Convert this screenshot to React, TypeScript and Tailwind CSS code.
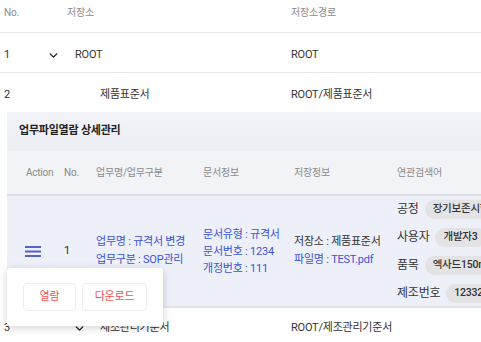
import { ChevronDown } from "lucide-react";

const font = { fontFamily: "Roboto, 'Noto Sans CJK KR', sans-serif" };

function Chevron() {
    return <ChevronDown className="w-[13px] h-[13px] text-[#222]" strokeWidth={2.6} />;
}

function Chip({ label, value }: { label: string; value: string }) {
    return (
        <div className="flex items-center gap-[6px] h-[28px]">
            <span className="text-[12px] text-[#333]">{label}</span>
            <span className="h-[19px] px-[8px] flex items-center rounded-full bg-[#e3e3e5] text-[10.5px] font-medium text-[#333] whitespace-nowrap">
                {value}
            </span>
        </div>
    );
}

export default function App() {
    return (
        <div className="w-[481px] h-[342px] overflow-hidden bg-white relative text-[11px] text-[#333] tracking-[-0.02em]" style={font}>
            {/* outer table header */}
            <div className="flex h-[33px] pt-[5px] border-b border-[#e6e6e6] text-[10px] text-[#8a8a8a]">
                <div className="w-[67px] shrink-0 pl-[4px]">No.</div>
                <div className="w-[224px] shrink-0">저장소</div>
                <div>저장소경로</div>
            </div>

            <div className="flex items-center h-[40px] pt-[5px] border-b border-[#e6e6e6]">
                <div className="w-[47px] shrink-0 pl-[4px]">1</div>
                <div className="w-[244px] shrink-0 flex items-center gap-[15px]">
                    <Chevron />
                    <span>ROOT</span>
                </div>
                <div>ROOT</div>
            </div>

            <div className="flex items-center h-[39px] pt-[5px]">
                <div className="w-[100px] shrink-0 pl-[4px]">2</div>
                <div className="w-[191px] shrink-0">제품표준서</div>
                <div>ROOT/제품표준서</div>
            </div>

            {/* expanded panel */}
            <div className="ml-[7px] bg-[#eff2f8] border-b-2 border-[#e2e4ea]">
                <div className="h-[39px] pl-[12px] flex items-center font-bold text-[11px] text-[#222] bg-gradient-to-b from-[#f1f3f9] to-[#edeff4]">
                    업무파일열람 상세관리
                </div>
                <div className="flex items-center h-[45px] bg-[#f2f3f7] border-b-2 border-[#dcdee3] text-[10px] text-[#8a8a8a] whitespace-nowrap">
                    <div className="w-[57px] shrink-0 pl-[19px]">Action</div>
                    <div className="w-[32px] shrink-0">No.</div>
                    <div className="w-[107px] shrink-0">업무명/업무구분</div>
                    <div className="w-[91px] shrink-0">문서정보</div>
                    <div className="w-[103px] shrink-0">저장정보</div>
                    <div className="shrink-0">연관검색어</div>
                </div>
                <div className="flex items-center h-[110px] bg-[#edf0f8] whitespace-nowrap">
                    <div className="w-[57px] shrink-0 pl-[18px] flex">
                        <svg width="16" height="12" viewBox="0 0 16 12">
                            <rect x="0" y="1" width="16" height="2" fill="#5563c1" />
                            <rect x="0" y="5.5" width="16" height="2" fill="#5563c1" />
                            <rect x="0" y="10" width="16" height="2" fill="#5563c1" />
                        </svg>
                    </div>
                    <div className="w-[32px] shrink-0">1</div>
                    <div className="w-[107px] shrink-0 text-[#3b52d9] leading-[18px]">
                        <div>업무명 : 규격서 변경</div>
                        <div>업무구분 : SOP관리</div>
                    </div>
                    <div className="w-[91px] shrink-0 text-[#3b52d9] leading-[17px]">
                        <div>문서유형 : 규격서</div>
                        <div>문서번호 : 1234</div>
                        <div>개정번호 : 111</div>
                    </div>
                    <div className="w-[103px] shrink-0 leading-[18px]">
                        <div>저장소 : 제품표준서</div>
                        <div className="text-[#3b52d9]">파일명 : TEST.pdf</div>
                    </div>
                    <div className="shrink-0 flex flex-col">
                        <Chip label="공정" value="장기보존시험" />
                        <Chip label="사용자" value="개발자3" />
                        <Chip label="품목" value="엑사드150mg" />
                        <Chip label="제조번호" value="12332" />
                    </div>
                </div>
            </div>

            <div className="flex items-center h-[40px]">
                <div className="w-[73px] shrink-0 pl-[4px]">3</div>
                <div className="w-[27px] shrink-0"><Chevron /></div>
                <div className="w-[191px] shrink-0">제조관리기준서</div>
                <div>ROOT/제조관리기준서</div>
            </div>

            {/* action popup */}
            <div className="absolute left-[7px] top-[268px] w-[156px] h-[58px] bg-white rounded-[3px] shadow-[0_2px_8px_rgba(0,0,0,0.18)] flex items-center gap-[6px] pl-[16px]">
                <button className="w-[53px] h-[28px] rounded-[4px] border border-[#ececec] text-[11px] text-[#f0524f]">열람</button>
                <button className="w-[65px] h-[28px] rounded-[4px] border border-[#ececec] text-[11px] text-[#f0524f]">다운로드</button>
            </div>
        </div>
    );
}
